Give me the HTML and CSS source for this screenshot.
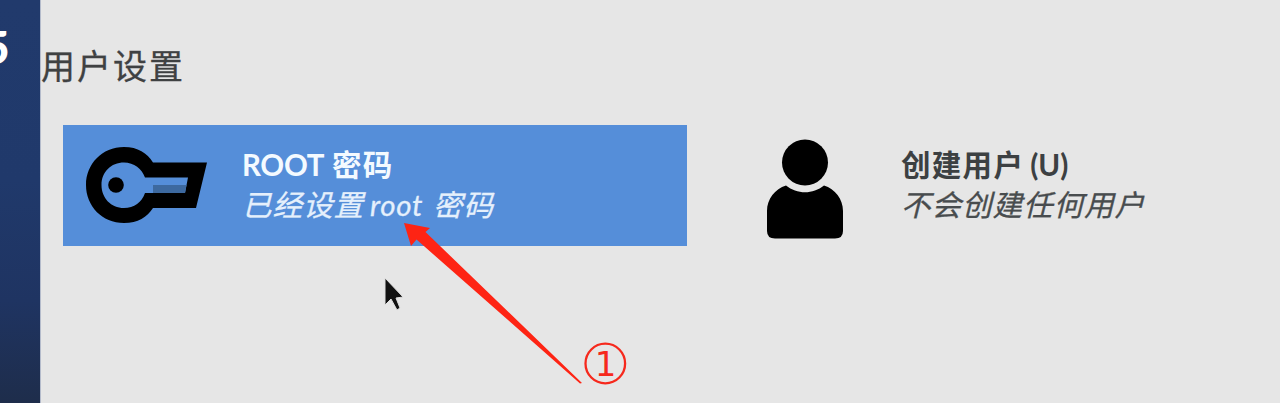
FILE: index.html
```html
<!DOCTYPE html>
<html lang="zh-CN">
<head>
<meta charset="utf-8">
<title>用户设置</title>
<link rel="stylesheet" href="styles.css">
</head>
<body>
<div class="screen">
  <aside class="sidebar"><span class="brand">5</span></aside>
  <main class="content">
    <h1 class="heading">用户设置</h1>
    <div class="spokes">
      <section class="spoke selected">
        <svg class="key" width="124" height="80" viewBox="0 0 124 80">
          <path fill="#000" fill-rule="evenodd" d="M40 2C54 2 63 8 69 17.500H123L112 63H69C63 72 54 78 40 78C18 78 2 61 2 40S18 2 40 2ZM40 17.500C27 17.500 17.500 27 17.500 40S27 63 40 63C50 63 58 57 61 48H101L104 32.500H61C58 24 50 17.500 40 17.500Z"/>
          <path fill="#3d699f" d="M69 40H102.500L101 48H69Z"/>
          <circle cx="32" cy="40" r="7.800"/>
        </svg>
        <div class="labels">
          <div class="name"><span class="latin">ROOT</span><span class="cjk">密码</span></div>
          <div class="status"><span>已经设置</span><span class="latin">root</span><span class="cjk">密码</span></div>
        </div>
      </section>
      <section class="spoke">
        <svg class="person" width="78" height="102" viewBox="0 0 78 102">
          <circle cx="39" cy="23.500" r="23"/>
          <path d="M20 46.500C31 55.500 47 55.500 58 46.500C69 50 77 60 77 72V92Q77 99.500 69 99.500H9Q1 99.500 1 92V72C1 60 9 50 20 46.500Z"/>
        </svg>
        <div class="labels">
          <div class="name"><span>创建用户</span><span class="key-hint">(U)</span></div>
          <div class="status"><span>不会创建任何用户</span></div>
        </div>
      </section>
    </div>
  </main>
  <svg class="annotation" width="1280" height="403" viewBox="0 0 1280 403">
    <path fill="#fe2414" d="M404 223L430 228L425.500 232L582 383L580 383.500L416.500 239.500L411 246Z"/>
    <circle cx="605.3" cy="363.5" r="19.800" fill="none" stroke="#f6291d" stroke-width="2.300"/>
    <text class="step" x="605.500" y="375.500" text-anchor="middle">1</text>
  </svg>
  <svg class="pointer" width="24" height="38" viewBox="0 0 24 38">
    <path fill="#111" stroke="#dedede" stroke-width="1" d="M2 2V29L8 23L14 34L17 32L13 22L20 21Z"/>
  </svg>
</div>
</body>
</html>
```
FILE: styles.css
```css
* { box-sizing: border-box; }
body { margin: 0; font-family: Lato, "Noto Sans CJK SC", sans-serif; }
.screen {
  position: relative;
  display: flex;
  width: 1280px;
  height: 403px;
  overflow: hidden;
  background: #e6e6e6;
}
.sidebar {
  width: 40px;
  flex: none;
  display: flex;
  padding-top: 22px;
  overflow: hidden;
  background: linear-gradient(#213a6c 0, #20396b 180px, #1f3462 300px, #1e2d4b 403px);
}
.brand {
  margin-left: -17px;
  color: #fff;
  font: 900 46px/50px Lato, sans-serif;
}
.content { flex: 1; border-left: 1px solid #b4bbcb; }
.heading {
  margin: 42px 0 0;
  height: 48px;
  font-weight: 400;
  font-size: 34px;
  line-height: 48px;
  letter-spacing: 2px;
  color: #3f4142;
  -webkit-text-stroke: .3px;
}
.spokes { display: flex; gap: 56px; padding: 35px 0 0 22px; }
.spoke { display: flex; height: 121px; width: 480px; }
.selected { width: 624px; background: #558ed9; color: #fff; }
.key { margin: 20px 0 0 21px; }
.person { margin: 14px 0 0 23px; }
.labels { padding-top: 20px; margin-left: 57px; white-space: nowrap; }
.selected .labels { margin-left: 34px; }
.name, .status {
  display: flex;
  align-items: baseline;
  height: 40px;
  font-size: 29.5px;
  line-height: 40px;
  letter-spacing: 1.3px;
}
.name { font-weight: 700; color: #3c4042; }
.status {
  font-style: italic;
  letter-spacing: 1px;
  color: #484c4e;
  -webkit-text-stroke: .3px;
}
.selected .name { color: #f4faff; }
.selected .status { color: #e5f0fc; }
.name .latin { width: 90px; letter-spacing: -.3px; }
.status .latin { margin-left: 6px; width: 63px; letter-spacing: .7px; }
.key-hint { margin-left: 6px; letter-spacing: 0; }
.annotation { position: absolute; left: 0; top: 0; }
.pointer { position: absolute; left: 383px; top: 276px; }
.step { fill: #f6291d; font: 34px "DejaVu Sans", sans-serif; }
```
